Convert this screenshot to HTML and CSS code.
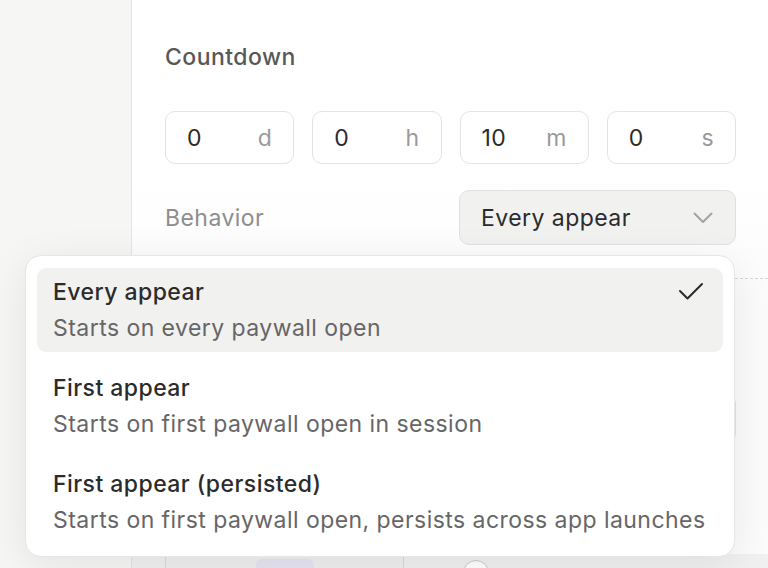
FILE: index.html
```html
<!DOCTYPE html>
<html lang="en">
<head>
  <meta charset="UTF-8">
  <meta name="viewport" content="width=device-width, initial-scale=1.0">
  <title>Countdown settings</title>
  <link rel="stylesheet" href="styles.css">
</head>
<body>
  <div class="app">
    <aside class="sidebar"></aside>
    <main class="panel">
      <h2 class="section-title">Countdown</h2>
      <div class="time-row">
        <div class="time-field"><span class="value">0</span><span class="unit">d</span></div>
        <div class="time-field"><span class="value">0</span><span class="unit">h</span></div>
        <div class="time-field"><span class="value">10</span><span class="unit">m</span></div>
        <div class="time-field"><span class="value">0</span><span class="unit">s</span></div>
      </div>
      <div class="behavior-row">
        <span class="label">Behavior</span>
        <button class="select">
          <span>Every appear</span>
          <svg width="20" height="12" viewBox="0 0 20 12"><path d="M1.5 1.5l8.5 8.5 8.5-8.5" fill="none" stroke="#a3a3a3" stroke-width="2" stroke-linecap="round" stroke-linejoin="round"/></svg>
        </button>
      </div>
      <hr class="divider">
      <div class="filler">
        <div class="field-stub"></div>
      </div>
      <div class="bottom-row">
        <div class="tabs-stub"><span class="tab-pill"></span></div>
        <span class="radio-stub"></span>
      </div>
    </main>
  </div>

  <div class="menu">
    <div class="option selected">
      <div class="option-text">
        <div class="option-title">Every appear</div>
        <div class="option-desc">Starts on every paywall open</div>
      </div>
      <svg class="check" width="26" height="18" viewBox="0 0 26 18"><path d="M2 9l7.5 7.5L24 2" fill="none" stroke="#2b2b2b" stroke-width="2" stroke-linecap="round" stroke-linejoin="round"/></svg>
    </div>
    <div class="option">
      <div class="option-text">
        <div class="option-title">First appear</div>
        <div class="option-desc">Starts on first paywall open in session</div>
      </div>
    </div>
    <div class="option">
      <div class="option-text">
        <div class="option-title">First appear (persisted)</div>
        <div class="option-desc">Starts on first paywall open, persists across app launches</div>
      </div>
    </div>
  </div>
</body>
</html>
```

FILE: styles.css
```css
body {
  margin: 0;
  font-family: Inter, "Noto Sans", sans-serif;
  letter-spacing: 0.45px;
  background-color: #fff;
  color: #2b2b2b;
  overflow: hidden;
}
.app {
  display: flex;
  height: 568px;
}
.sidebar {
  width: 131px;
  background-color: #f6f6f5;
  border-right: 1px solid #e4e4e3;
}
.panel {
  flex: 1;
  overflow: hidden;
  padding: 0 32px 0 33px;
  background: linear-gradient(to bottom, #fff 0, #fff 180px, #fbfbfb 300px, #fbfbfb 100%);
}
.section-title {
  margin: 43px 0 40px;
  font-size: 23px;
  font-weight: 450;
  color: #585858;
  line-height: 28px;
}
.time-row {
  display: grid;
  grid-template-columns: repeat(4, 1fr);
  gap: 18px;
}
.time-field {
  height: 51px;
  border: 1px solid #e3e3e3;
  border-radius: 10px;
  background-color: #fff;
  display: flex;
  align-items: center;
  justify-content: space-between;
  padding: 0 21px;
  font-size: 23px;
}
.value {
  color: #2b2b2b;
}
.unit {
  color: #9a9a9a;
}
.behavior-row {
  display: flex;
  align-items: center;
  justify-content: space-between;
  margin-top: 26px;
}
.label {
  font-size: 23px;
  color: #8d8d8d;
}
.select {
  width: 277px;
  height: 55px;
  border: 1px solid #e0e0df;
  border-radius: 10px;
  background-color: #f1f1f0;
  display: flex;
  align-items: center;
  justify-content: space-between;
  padding: 0 22px 0 21px;
  font-family: inherit;
  letter-spacing: inherit;
  font-size: 23px;
  color: #2b2b2b;
}
.divider {
  margin: 33px -32px 0 0;
  border: 0;
  border-top: 1px dashed #d6d6d6;
}
.filler {
  height: 275px;
  display: flex;
  justify-content: flex-end;
  align-items: flex-start;
}
.field-stub {
  margin-top: 117px;
  width: 20px;
  height: 44px;
  border: 1px solid #e2e2e2;
  border-left: 0;
  border-radius: 0 8px 8px 0;
}
.bottom-row {
  display: flex;
  align-items: flex-start;
  gap: 59px;
  margin: 0 -32px 0 -33px;
  padding: 0 32px 0 33px;
  height: 20px;
  background-color: #f0f0f0;
}
.tabs-stub {
  width: 239px;
  height: 20px;
  border-left: 1px solid #d9d9d9;
  border-right: 1px solid #d9d9d9;
  background-color: #efefef;
  padding-left: 90px;
  box-sizing: border-box;
}
.tab-pill {
  display: block;
  width: 58px;
  height: 20px;
  margin-top: 5px;
  border-radius: 6px;
  background-color: #e6e4f2;
}
.radio-stub {
  width: 24px;
  height: 24px;
  margin-top: 6px;
  border: 1px solid #c9c9c9;
  border-radius: 50%;
  background-color: #fff;
}

/* dropdown menu over the panel */
.menu {
  position: absolute;
  left: 25px;
  top: 255px;
  width: 686px;
  padding: 12px 11px;
  background-color: #fff;
  border: 1px solid #e6e6e5;
  border-radius: 16px;
  box-shadow: 0 8px 40px rgba(0, 0, 0, 0.08);
  display: flex;
  flex-direction: column;
  gap: 12px;
}
.option {
  height: 84px;
  border-radius: 9px;
  padding: 0 16px;
  display: flex;
  align-items: center;
  justify-content: space-between;
}
.option.selected {
  background-color: #f1f1f0;
}
.option-text {
  display: flex;
  flex-direction: column;
  gap: 6px;
}
.option-title {
  font-size: 23px;
  font-weight: 450;
  color: #2b2b2b;
  line-height: 30px;
}
.option-desc {
  font-size: 23px;
  color: #666;
  line-height: 30px;
}
.check {
  align-self: flex-start;
  margin-top: 14px;
  margin-right: 3px;
}
```
